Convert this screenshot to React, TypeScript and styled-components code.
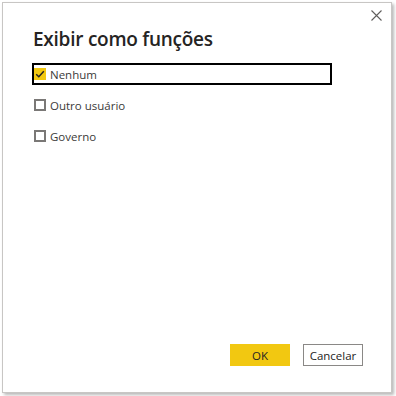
import React, { useState } from 'react';
import styled, { createGlobalStyle } from 'styled-components';

const GlobalStyle = createGlobalStyle`
  html, body {
    margin: 0;
    padding: 0;
    background: #ffffff;
  }
  body {
    font-family: "Open Sans", "Noto Sans", "Liberation Sans", sans-serif;
    color: #252423;
  }
`;

const roles = [
  { id: 'none', label: 'Nenhum' },
  { id: 'other', label: 'Outro usuário' },
  { id: 'gov', label: 'Governo' },
];

export default function App() {
  const [selected, setSelected] = useState<string[]>(['none']);

  const toggle = (id: string) => {
    setSelected((prev) =>
      prev.includes(id) ? prev.filter((x) => x !== id) : [...prev, id],
    );
  };

  return (
    <>
      <GlobalStyle />
      <Page>
        <Dialog role="dialog" aria-label="Exibir como funções">
          <Header>
            <Title>Exibir como funções</Title>
            <CloseButton type="button" aria-label="Fechar">
              <svg width="11" height="11" viewBox="0 0 11 11">
                <path d="M0.5 0.5 L10.5 10.5 M10.5 0.5 L0.5 10.5" stroke="#605e5c" strokeWidth="1.1" fill="none" />
              </svg>
            </CloseButton>
          </Header>
          <OptionList>
            {roles.map((role, i) => {
              const checked = selected.includes(role.id);
              return (
                <Option key={role.id} $focused={i === 0} onClick={() => toggle(role.id)}>
                  <Box $checked={checked}>
                    {checked ? (
                      <svg width="12" height="12" viewBox="0 0 12 12">
                        <path d="M2.2 6.2 L4.8 8.7 L9.8 3.2" stroke="#252423" strokeWidth="1.5" fill="none" />
                      </svg>
                    ) : null}
                  </Box>
                  <Label>{role.label}</Label>
                </Option>
              );
            })}
          </OptionList>
          <Footer>
            <Button type="button" $primary>
              OK
            </Button>
            <Button type="button">Cancelar</Button>
          </Footer>
        </Dialog>
      </Page>
    </>
  );
}

const Page = styled.div`
  width: 396px;
  height: 396px;
  box-sizing: border-box;
  padding: 2px 4px 3px 2px;
  display: flex;
`;

const Dialog = styled.div`
  flex: 1;
  display: flex;
  flex-direction: column;
  background: #ffffff;
  border: 1px solid #c8c6c4;
  box-shadow: 2px 2px 3px rgba(0, 0, 0, 0.28);
`;

const Header = styled.div`
  display: flex;
  justify-content: space-between;
  align-items: flex-start;
  padding: 0 9px 0 30px;
`;

const Title = styled.h1`
  margin: 23px 0 0;
  font-size: 19px;
  line-height: 27px;
  font-weight: 600;
  color: #252423;
  letter-spacing: -0.25px;
`;

const CloseButton = styled.button`
  margin-top: 7px;
  padding: 0;
  width: 11px;
  height: 11px;
  border: none;
  background: none;
  display: flex;
  cursor: pointer;
`;

const OptionList = styled.div`
  display: flex;
  flex-direction: column;
  gap: 9px;
  padding: 10px 0 0 29px;
`;

const Option = styled.label<{ $focused?: boolean }>`
  width: 300px;
  height: 22px;
  box-sizing: border-box;
  display: flex;
  align-items: center;
  gap: 4px;
  padding-left: 0;
  border: 2px solid ${(p) => (p.$focused ? '#000000' : 'transparent')};
  cursor: pointer;
`;

const Box = styled.span<{ $checked?: boolean }>`
  width: 12px;
  height: 12px;
  flex-shrink: 0;
  box-sizing: border-box;
  display: flex;
  background: ${(p) => (p.$checked ? '#f2c811' : '#ffffff')};
  border: ${(p) => (p.$checked ? 'none' : '2px solid #7a7876')};
`;

const Label = styled.span`
  font-size: 11.5px;
  color: #3b3a39;
`;

const Footer = styled.div`
  margin-top: auto;
  display: flex;
  justify-content: flex-end;
  gap: 13px;
  padding: 0 28px 26px 0;
`;

const Button = styled.button<{ $primary?: boolean }>`
  width: 60px;
  height: 22px;
  padding: 0;
  font-family: inherit;
  font-size: 11.5px;
  color: #252423;
  background: ${(p) => (p.$primary ? '#f2c811' : '#ffffff')};
  border: 1px solid ${(p) => (p.$primary ? '#f2c811' : '#8a8886')};
  cursor: pointer;
`;
